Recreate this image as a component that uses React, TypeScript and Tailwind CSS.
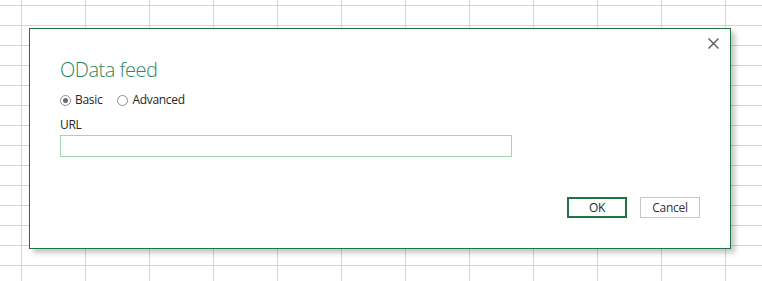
import { useState } from 'react';

const Radio = ({ checked, label, onClick }: { checked: boolean; label: string; onClick: () => void }) => (
  <button type="button" onClick={onClick} className="flex items-center gap-[4px] text-[12px] leading-[16px] tracking-[-0.3px] text-[#262626]">
    <span className="flex h-[11px] w-[11px] items-center justify-center rounded-full border border-[#8f8f8f] bg-white">
      {checked && <span className="h-[5px] w-[5px] rounded-full bg-[#6b6b6b]" />}
    </span>
    {label}
  </button>
);

export default function App() {
  const [mode, setMode] = useState<'basic' | 'advanced'>('basic');
  const [url, setUrl] = useState('');

  return (
    <div
      className="h-[281px] w-full overflow-hidden bg-white bg-[linear-gradient(to_right,#d4d4d4_1px,transparent_1px),linear-gradient(to_bottom,#d4d4d4_1px,transparent_1px)] bg-[length:64px_20px] bg-[position:21px_5px] pl-[29px] pt-[28px]"
      style={{ fontFamily: '"Open Sans", "Noto Sans", sans-serif' }}
    >
      <div className="relative flex h-[221px] w-[702px] flex-col border border-[#217346] bg-white pl-[30px] pr-[30px] pt-[27px] shadow-[4px_4px_5px_rgba(0,0,0,0.22)]">
        <button type="button" className="absolute right-[10px] top-[8px] p-[1px] text-[#5a5a5a]" aria-label="Close">
          <svg width="11" height="11" viewBox="0 0 11 11" fill="none" stroke="currentColor" strokeWidth="1.4">
            <path d="M0.5 0.5 L10.5 10.5 M10.5 0.5 L0.5 10.5" />
          </svg>
        </button>

        <h1 className="text-[20px] font-light leading-[27px] tracking-[-0.5px] text-[#2f8560]">OData feed</h1>

        <div className="mt-[9px] flex items-center gap-[15px]">
          <Radio checked={mode === 'basic'} label="Basic" onClick={() => setMode('basic')} />
          <Radio checked={mode === 'advanced'} label="Advanced" onClick={() => setMode('advanced')} />
        </div>

        <label className="mt-[9px] text-[12px] leading-[16px] tracking-[-0.3px] text-[#262626]">URL</label>
        <input
          value={url}
          onChange={(e) => setUrl(e.target.value)}
          className="mt-[2px] h-[22px] w-[452px] border border-[#9fd6b6] px-1 text-[12px] outline-none"
        />

        <div className="mt-[40px] flex justify-end gap-[13px]">
          <button type="button" className="h-[21px] w-[60px] border-2 border-[#217346] text-[12px] tracking-[-0.3px] text-[#262626]">
            OK
          </button>
          <button type="button" className="h-[21px] w-[60px] border border-[#c6c6c6] text-[12px] tracking-[-0.3px] text-[#333333]">
            Cancel
          </button>
        </div>
      </div>
    </div>
  );
}
